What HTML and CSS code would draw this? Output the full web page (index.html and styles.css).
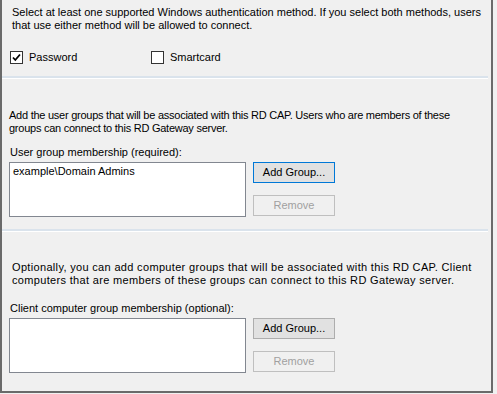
FILE: index.html
```html
<!DOCTYPE html>
<html>
<head>
<meta charset="utf-8">
<link rel="stylesheet" href="styles.css">
</head>
<body>
<div class="panel">
  <section class="sec sec-auth">
    <p class="text">Select at least one supported Windows authentication method. If you select both methods, users that use either method will be allowed to connect.</p>
    <div class="checks">
      <label class="check">
        <span class="box">
          <svg width="11" height="11" viewBox="0 0 11 11"><path d="M2 5.5 L4.3 8 L9 2.5" fill="none" stroke="#000" stroke-width="1.8"/></svg>
        </span>
        <span>Password</span>
      </label>
      <label class="check check-smart">
        <span class="box"></span>
        <span>Smartcard</span>
      </label>
    </div>
  </section>
  <div class="sep"></div>
  <section class="sec sec-users">
    <p class="text">Add the user groups that will be associated with this RD CAP. Users who are members of these groups can connect to this RD Gateway server.</p>
    <div class="label">User group membership (required):</div>
    <div class="row">
      <div class="list"><div class="item">example\Domain Admins</div></div>
      <div class="buttons">
        <div class="btn btn-focus">Add Group...</div>
        <div class="btn btn-disabled">Remove</div>
      </div>
    </div>
  </section>
  <div class="sep sep2"></div>
  <section class="sec sec-clients">
    <p class="text">Optionally, you can add computer groups that will be associated with this RD CAP. Client computers that are members of these groups can connect to this RD Gateway server.</p>
    <div class="label label2">Client computer group membership (optional):</div>
    <div class="row">
      <div class="list"></div>
      <div class="buttons">
        <div class="btn">Add Group...</div>
        <div class="btn btn-disabled">Remove</div>
      </div>
    </div>
  </section>
</div>
</body>
</html>
```

FILE: styles.css
```css
html, body {
  margin: 0;
  padding: 0;
  background: #f0f0f0;
}
.panel {
  width: 493px;
  height: 393px;
  box-sizing: border-box;
  border: 2px solid #6a6a6a;
  border-top: 0;
  background: #f0f0f0;
  font-family: "Liberation Sans", Arial, sans-serif;
  font-size: 11px;
  line-height: 13px;
  color: #000;
}
.text {
  margin: 0;
}
.sec-auth {
  padding: 6px 0 0 10px;
}
.checks {
  display: flex;
  margin: 19px 0 0 -2px;
  height: 13px;
}
.check {
  display: flex;
  align-items: center;
  gap: 6px;
  width: 141px;
}
.box {
  width: 11px;
  height: 11px;
  border: 1px solid #333;
  background: #fff;
  display: flex;
  align-items: center;
  justify-content: center;
}
.sep {
  margin-top: 12px;
  width: 486px;
  height: 2px;
  background: #dae3ec;
  border-bottom: 1px solid #fff;
}
.sec-users {
  padding: 30px 0 0 7px;
}
.sec-users .text {
  letter-spacing: -0.25px;
  max-width: 448px;
}
.label {
  margin-top: 11px;
  padding-left: 1px;
}
.row {
  display: flex;
  gap: 7px;
  margin-top: 3px;
}
.list {
  width: 235px;
  height: 53px;
  background: #fff;
  border: 1px solid #828790;
}
.item {
  padding: 2px 0 0 3px;
}
.buttons {
  display: flex;
  flex-direction: column;
  gap: 12px;
}
.btn {
  width: 80px;
  height: 19px;
  box-sizing: content-box;
  border: 1px solid #adadad;
  background: #e1e1e1;
  text-align: center;
  line-height: 19px;
}
.btn-focus {
  border-color: #0078d7;
}
.btn-disabled {
  background: #f0f0f0;
  border-color: #bfbfbf;
  color: #a0a0a0;
}
.sep2 {
  margin-top: 12px;
}
.sec-clients {
  padding: 29px 0 0 7px;
}
.sec-clients .text {
  padding-left: 3px;
  letter-spacing: 0.33px;
}
.label2 {
  margin-top: 15px;
}
```
